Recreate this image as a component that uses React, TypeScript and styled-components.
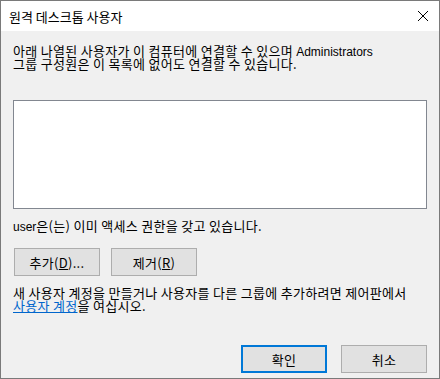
import styled, { createGlobalStyle } from 'styled-components';

const GlobalStyle = createGlobalStyle`
  html, body {
    margin: 0;
    padding: 0;
    background: #ffffff;
  }
  body {
    font-family: "Noto Sans CJK KR", "Noto Sans", sans-serif;
    font-size: 13px;
    color: #000000;
  }
`;

const Window = styled.div`
  width: 440px;
  height: 379px;
  box-sizing: border-box;
  display: flex;
  flex-direction: column;
  border: 1px solid #7a7a7a;
  background-color: #f0f0f0;
`;

const TitleBar = styled.div`
  height: 30px;
  display: flex;
  align-items: center;
  justify-content: space-between;
  padding: 0 10px 0 8px;
  background-color: #ffffff;
`;

const Title = styled.span`
  font-size: 13px;
  line-height: 15px;
`;

const CloseIcon = () => (
  <svg width="12" height="12" viewBox="0 0 12 12">
    <path d="M1 1 L11 11 M11 1 L1 11" stroke="#000" strokeWidth="1" fill="none" />
  </svg>
);

const Body = styled.div`
  flex: 1;
  display: flex;
  flex-direction: column;
  padding: 13px 12px 5px 12px;
`;

interface ITextProps {
  gap?: number;
}

const Text = styled.p<ITextProps>`
  margin: ${props => props.gap ?? 0}px 0 0 0;
  font-size: 13px;
  line-height: 13px;
  letter-spacing: 0.3px;
`;

const Latin = styled.span`
  font-family: "Liberation Sans", "Noto Sans", sans-serif;
  font-size: 12px;
  line-height: 10px;
  letter-spacing: 0;
`;

const Link = styled.a`
  color: #0066cc;
  text-decoration: underline;
  cursor: pointer;
`;

const ListBox = styled.div`
  height: 109px;
  margin-top: 30px;
  box-sizing: border-box;
  border: 1px solid #828790;
  background-color: #ffffff;
`;

const ButtonRow = styled.div`
  display: flex;
  gap: 11px;
  margin: 16px 0 0 1px;
`;

const Footer = styled.div`
  margin-top: auto;
  display: flex;
  justify-content: flex-end;
  gap: 14px;
`;

interface IButtonProps {
  primary?: boolean;
}

const Button = styled.button<IButtonProps>`
  width: 86px;
  height: 28px;
  box-sizing: border-box;
  padding: 0;
  display: flex;
  align-items: center;
  justify-content: center;
  font-family: inherit;
  font-size: 13px;
  letter-spacing: 0.3px;
  color: #000000;
  background-color: #e1e1e1;
  border: ${props => (props.primary ? '2px solid #0078d7' : '1px solid #adadad')};
`;

const Key = styled.span`
  text-decoration: underline;
`;

export default function App() {
  return (
    <>
      <GlobalStyle />
      <Window>
        <TitleBar>
          <Title>원격 데스크톱 사용자</Title>
          <CloseIcon />
        </TitleBar>
        <Body>
          <Text>
            아래 나열된 사용자가 이 컴퓨터에 연결할 수 있으며 <Latin>Administrators</Latin>
            <br />
            그룹 구성원은 이 목록에 없어도 연결할 수 있습니다.
          </Text>
          <ListBox />
          <Text gap={10}>
            <Latin>user</Latin>은(는) 이미 액세스 권한을 갖고 있습니다.
          </Text>
          <ButtonRow>
            <Button>
              추가(<Key>D</Key>)...
            </Button>
            <Button>
              제거(<Key>R</Key>)
            </Button>
          </ButtonRow>
          <Text gap={10}>
            새 사용자 계정을 만들거나 사용자를 다른 그룹에 추가하려면 제어판에서
            <br />
            <Link>사용자 계정</Link>을 여십시오.
          </Text>
          <Footer>
            <Button primary>확인</Button>
            <Button>취소</Button>
          </Footer>
        </Body>
      </Window>
    </>
  );
}
